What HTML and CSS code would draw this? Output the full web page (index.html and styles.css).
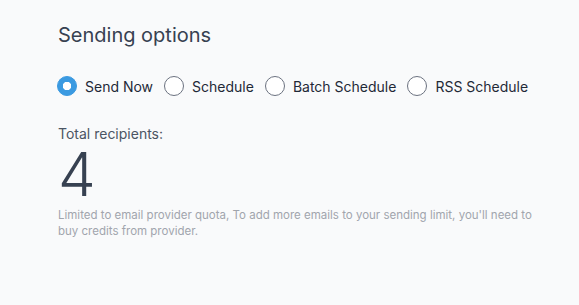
FILE: index.html
```html
<!DOCTYPE html>
<html lang="en">
<head>
    <meta charset="UTF-8">
    <meta name="viewport" content="width=device-width, initial-scale=1.0">
    <title>Sending options</title>
    <link rel="stylesheet" href="styles.css">
</head>
<body>
    <section class="sending-card">
        <h2>Sending options</h2>

        <div class="radio-group">
            <label class="radio-option">
                <input type="radio" name="sendType" value="now" checked>
                <span class="radio-mark"></span>
                Send Now
            </label>
            <label class="radio-option">
                <input type="radio" name="sendType" value="schedule">
                <span class="radio-mark"></span>
                Schedule
            </label>
            <label class="radio-option">
                <input type="radio" name="sendType" value="batch">
                <span class="radio-mark"></span>
                Batch Schedule
            </label>
            <label class="radio-option">
                <input type="radio" name="sendType" value="rss">
                <span class="radio-mark"></span>
                RSS Schedule
            </label>
        </div>

        <div class="recipients">
            <p class="recipients-label">Total recipients:</p>
            <p class="recipients-count">4</p>
        </div>

        <p class="quota-note">
            Limited to email provider quota, To add more emails to your sending limit, you'll need to buy credits from provider.
        </p>
    </section>
</body>
</html>
```

FILE: styles.css
```css
/* General Styles */
body {
    font-family: Inter, "Noto Sans", sans-serif;
    background-color: #f9fafb;
    margin: 0;
    color: #374151;
}
/* Card */
.sending-card {
    padding: 23px 30px 40px 58px;
}
h2 {
    font-size: 20px;
    font-weight: 400;
    color: #374151;
    margin: 0;
    line-height: 24px;
}
/* Radios */
.radio-group {
    display: flex;
    align-items: center;
    gap: 12px;
    margin-top: 29px;
}
.radio-option {
    display: flex;
    align-items: center;
    gap: 8px;
    font-size: 14px;
    color: #1f2937;
    cursor: pointer;
}
.radio-option input {
    display: none;
}
.radio-mark {
    width: 18px;
    height: 18px;
    border: 1px solid #6b7280;
    border-radius: 50%;
    background: #fff;
    box-sizing: content-box;
    margin-left: -1px;
}
.radio-option input:checked + .radio-mark {
    border-color: #3b9ae1;
    background: #3b9ae1;
    background-image: radial-gradient(circle, #fff 0 4px, transparent 4.5px);
}
/* Recipients */
.recipients {
    margin-top: 29px;
}
.recipients-label {
    font-size: 14px;
    color: #4b5563;
    margin: 0;
    line-height: 18px;
}
.recipients-count {
    font-size: 60px;
    font-weight: 300;
    color: #374151;
    margin: 0;
    line-height: 62px;
}
.quota-note {
    font-size: 11.5px;
    color: #a1a5ad;
    line-height: 16px;
    margin: 2px 0 0;
    max-width: 485px;
}
```
